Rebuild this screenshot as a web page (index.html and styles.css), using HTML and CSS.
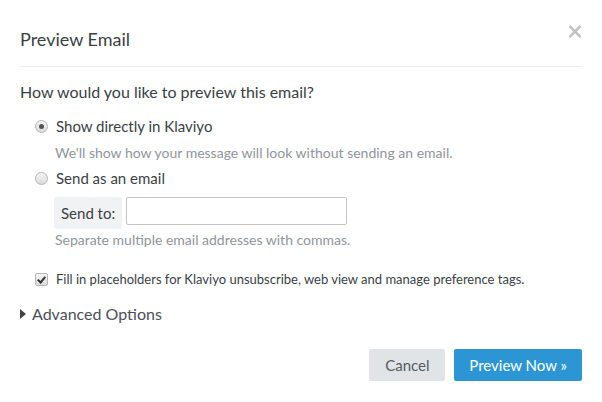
FILE: index.html
```html
<!DOCTYPE html>
<html lang="en">

<head>
    <meta charset="UTF-8">
    <meta name="viewport" content="width=device-width, initial-scale=1.0">
    <title>Preview Email</title>
    <link rel="stylesheet" href="styles.css">
</head>

<body>
    <div class="modal">
        <div class="modal-header">
            <h2>Preview Email</h2>
            <svg class="close" width="14" height="13" viewBox="0 0 14 13">
                <path d="M1.5 1 L12.5 12 M12.5 1 L1.5 12" stroke="#c2c2c2" stroke-width="2.5" />
            </svg>
        </div>
        <div class="modal-body">
            <p class="question">How would you like to preview this email?</p>
            <label class="option"><span class="radio checked"></span> Show directly in Klaviyo</label>
            <p class="help">We'll show how your message will look without sending an email.</p>
            <label class="option"><span class="radio"></span> Send as an email</label>
            <div class="send-to">
                <span class="addon">Send to:</span>
                <input type="text" class="email-input">
            </div>
            <p class="help">Separate multiple email addresses with commas.</p>
            <label class="check-option"><span class="checkbox"></span> Fill in placeholders for Klaviyo unsubscribe, web view and manage preference tags.</label>
            <div class="advanced"><span class="caret"></span> Advanced Options</div>
        </div>
        <div class="modal-footer">
            <button class="btn btn-cancel">Cancel</button>
            <button class="btn btn-primary">Preview Now &raquo;</button>
        </div>
    </div>
</body>

</html>
```

FILE: styles.css
```css
body {
    margin: 0;
    background: white;
    font-family: Lato, "Open Sans", sans-serif;
    color: #3a3f45;
}

.modal {
    width: 602px;
    padding: 0 20px;
    box-sizing: border-box;
}

.modal-header {
    display: flex;
    justify-content: space-between;
    align-items: flex-start;
    padding-top: 28px;
    padding-bottom: 16px;
    border-bottom: 1px solid #eeeeee;
}

.modal-header h2 {
    margin: 0;
    font-size: 18px;
    font-weight: normal;
    line-height: 22px;
}

.close {
    margin-top: -3px;
}

.modal-body {
    padding-top: 14px;
}

.question {
    margin: 0 0 12px;
    font-size: 16px;
    line-height: 22px;
}

.option {
    display: flex;
    align-items: center;
    gap: 8px;
    margin-left: 15px;
    font-size: 15px;
    line-height: 22px;
}

.radio {
    width: 11px;
    height: 11px;
    border-radius: 50%;
    border: 1px solid #b5b5b5;
    background: linear-gradient(#f4f4f4, #dcdcdc);
    position: relative;
}

.radio.checked::after {
    content: "";
    position: absolute;
    left: 3px;
    top: 3px;
    width: 5px;
    height: 5px;
    border-radius: 50%;
    background: #555;
}

.help {
    margin: 6px 0 4px 35px;
    font-size: 14px;
    line-height: 20px;
    color: #8f959b;
}

.send-to {
    display: flex;
    gap: 4px;
    margin: 8px 0 0 34px;
}

.addon {
    background: #f1f2f3;
    padding: 0 7px;
    height: 32px;
    line-height: 32px;
    font-size: 15px;
    border-radius: 2px;
}

.email-input {
    width: 221px;
    height: 28px;
    box-sizing: border-box;
    border: 1px solid #c5c5c5;
    border-radius: 2px;
    margin: 0;
}

.send-to + .help {
    margin-top: 1px;
}

.check-option {
    display: flex;
    align-items: center;
    gap: 8px;
    margin: 19px 0 0 15px;
    font-size: 13px;
    line-height: 20px;
}

.checkbox {
    width: 11px;
    height: 11px;
    border: 1px solid #b5b5b5;
    border-radius: 2px;
    background: linear-gradient(#f4f4f4, #dcdcdc);
    position: relative;
}

.checkbox::after {
    content: "";
    position: absolute;
    left: 3px;
    top: 1px;
    width: 3px;
    height: 6px;
    border: solid #333;
    border-width: 0 2px 2px 0;
    transform: rotate(40deg);
}

.advanced {
    display: flex;
    align-items: center;
    gap: 6px;
    margin-top: 14px;
    font-size: 16px;
    line-height: 22px;
    color: #4a5058;
}

.caret {
    width: 0;
    height: 0;
    border-top: 5px solid transparent;
    border-bottom: 5px solid transparent;
    border-left: 6px solid #444;
}

.modal-footer {
    display: flex;
    justify-content: flex-end;
    gap: 9px;
    padding-top: 24px;
}

.btn {
    height: 32px;
    border: none;
    border-radius: 2px;
    font-family: inherit;
    font-size: 15px;
    padding: 0 15px;
    white-space: nowrap;
    cursor: pointer;
}

.btn-cancel {
    background: #e1e4e7;
    color: #555b62;
    min-width: 76px;
}

.btn-primary {
    background: #2b96d3;
    color: white;
    min-width: 126px;
}
```
